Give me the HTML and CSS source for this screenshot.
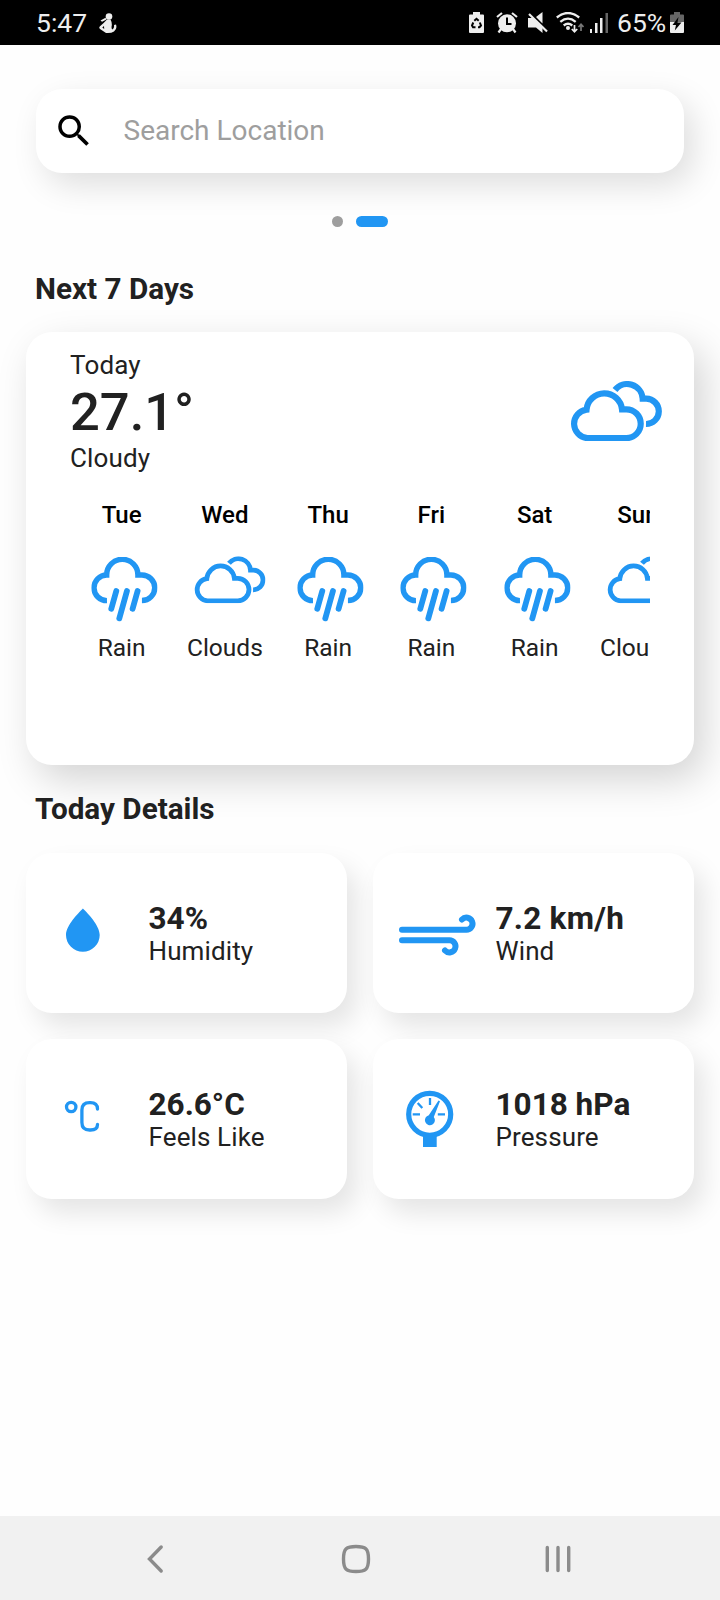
FILE: index.html
```html
<!DOCTYPE html>
<html lang="en">
<head>
<meta charset="utf-8">
<title>Weather</title>
<link rel="stylesheet" href="styles.css">
</head>
<body>
<svg class="defs" width="0" height="0">
  <symbol id="clouds" viewBox="93 182 276 181">
    <g fill="none" stroke="currentColor" stroke-width="18.500">
      <path d="M145 353.500H262A43 43 0 0 0 262 267H249A53.500 53.500 0 0 0 142.500 268A43 43 0 0 0 145 353.500Z"/>
      <path d="M228 209A46.500 46.500 0 0 1 311 235H322A38 38 0 0 1 321 311"/>
    </g>
  </symbol>
  <symbol id="rain" viewBox="93 230 199 194">
    <g fill="none" stroke="currentColor" stroke-width="16.500">
      <path d="M140 361A38.500 38.500 0 0 1 139 284A46.500 46.500 0 0 1 233 284H245A38.500 38.500 0 0 1 245 361"/>
      <path stroke-linecap="round" stroke-width="17.500" d="M168 332L153 385.500M200 332L177 414.500M232 332L217 385.500"/>
    </g>
  </symbol>
</svg>
<div class="screen">
  <header class="status">
    <span class="clock">5:47</span>
    <svg class="figure" width="18" height="21" viewBox="0 0 18 21" fill="#eee">
      <circle cx="10" cy="3.500" r="3.300"/>
      <path d="M1.500 7.500L6.500 4.800L7.500 6.500L3 8.800Z"/>
      <path fill-rule="evenodd" d="M8 6.500H11.500Q13.500 10 12.500 14Q12.500 16 13.500 16.500Q15.500 15.500 15 12L17 11.500Q18.500 16 15 18.500Q12 20.500 7 20Q4 18 1 16Q-.5 14.500 1 13.200Q4 11 8 6.500ZM5 13L3.300 14.500L5.200 16Z"/>
    </svg>
    <div class="indicators">
      <svg width="15" height="22" viewBox="0 0 15 22">
        <path fill="#eee" d="M4 0H11V2.500H14Q15 2.500 15 3.500V20Q15 21 14 21H1Q0 21 0 20V3.500Q0 2.500 1 2.500H4Z"/>
        <path fill="none" stroke="#000" stroke-width="2" d="M5.300 8.700L7.500 6.800L9.700 8.700M10.800 10.500L12 13.500L10.500 15.200H9M6.500 15.200H4L3 13.500L4.300 10.500"/>
      </svg>
      <svg class="alarm" width="22" height="22" viewBox="0 0 22 22">
        <circle cx="11" cy="11.300" r="9" fill="#eee"/>
        <path fill="none" stroke="#eee" stroke-width="2.200" d="M1 5L6 1M21 5L16 1M5 17L2.500 20.500M17 17L19.500 20.500"/>
        <path fill="none" stroke="#000" stroke-width="2" d="M11 5.500V12H15.500"/>
      </svg>
      <svg class="mute" width="20" height="22" viewBox="0 0 20 22">
        <path fill="#eee" d="M0 6H5L14.500 15V21L8 15.500H0ZM8 5L14.500 0V11.500Z"/>
        <path stroke="#eee" stroke-width="2.200" d="M1 2L19 19.500"/>
      </svg>
      <svg class="wifi" width="28" height="22" viewBox="0 0 28 22">
        <g fill="none" stroke="#eee" stroke-width="2.300">
          <path d="M.8 5.500Q12 -3.500 23.200 5.500M4.300 9.800Q12 3.500 19.700 9.800M7.700 13.500Q12 10 16.300 13.500"/>
          <path stroke-width="1.700" d="M18.500 13V19.500M15.800 17L18.500 19.800L21.200 17"/>
          <path stroke="#777" stroke-width="1.700" d="M25 19V12.500M22.500 15L25 12.300L27.500 15"/>
        </g>
        <circle cx="12" cy="16" r="2" fill="#eee"/>
      </svg>
      <svg class="signal" width="18" height="22" viewBox="0 0 18 22">
        <path fill="#eee" d="M0 17H2V21H0ZM5 11H7.500V21H5ZM10 6H12.500V21H10Z"/>
        <path fill="#666" d="M15.500 1H18V21H15.500Z"/>
      </svg>
      <span class="percent">65%</span>
      <svg class="battery" width="14" height="22" viewBox="0 0 14 22">
        <path fill="#666" d="M4 0H10V2.500H13Q14 2.500 14 3.500V10H0V3.500Q0 2.500 1 2.500H4Z"/>
        <path fill="#eee" d="M0 10H14V20Q14 21 13 21H1Q0 21 0 20Z"/>
        <path fill="#000" d="M8.500 5L2.500 13H6L4.800 18.500L11.500 10.500H7.500Z"/>
      </svg>
    </div>
  </header>

  <main class="content">
    <div class="search">
      <svg width="42" height="42" viewBox="0 0 24 24"><path d="M15.500 14h-.79l-.28-.27A6.471 6.471 0 0 0 16 9.500 6.500 6.500 0 1 0 9.500 16c1.610 0 3.090-.59 4.230-1.570l.27.28v.79l5 4.990L20.490 19l-4.990-5zm-6 0C7.010 14 5 11.990 5 9.500S7.010 5 9.500 5 14 7.010 14 9.500 11.990 14 9.500 14z"/></svg>
      <span class="placeholder">Search Location</span>
    </div>
    <div class="pager"><i class="dot"></i><i class="dot active"></i></div>
    <h2 class="heading">Next 7 Days</h2>
    <section class="forecast">
      <div class="now">
        <div>
          <div class="label">Today</div>
          <div class="temperature">27.1°</div>
          <div class="label condition">Cloudy</div>
        </div>
        <svg class="blue" width="92" height="60.300"><use href="#clouds"/></svg>
      </div>
      <div class="days">
        <div class="day"><b>Tue</b><svg class="blue icon"><use href="#rain" width="66.300" height="64.600" x="5.300" y="1"/></svg><span>Rain</span></div>
        <div class="day"><b>Wed</b><svg class="blue icon"><use href="#clouds" width="71.500" height="47" x="5" y="0.300"/></svg><span>Clouds</span></div>
        <div class="day"><b>Thu</b><svg class="blue icon"><use href="#rain" width="66.300" height="64.600" x="5.300" y="1"/></svg><span>Rain</span></div>
        <div class="day"><b>Fri</b><svg class="blue icon"><use href="#rain" width="66.300" height="64.600" x="5.300" y="1"/></svg><span>Rain</span></div>
        <div class="day"><b>Sat</b><svg class="blue icon"><use href="#rain" width="66.300" height="64.600" x="5.300" y="1"/></svg><span>Rain</span></div>
        <div class="day"><b>Sun</b><svg class="blue icon"><use href="#clouds" width="71.500" height="47" x="5" y="0.300"/></svg><span>Clouds</span></div>
      </div>
    </section>
    <h2 class="heading details-heading">Today Details</h2>
    <section class="details">
      <div class="tile">
        <svg class="blue" width="84" height="60" viewBox="0 0 84 60"><path fill="currentColor" d="M30.900 5.600C35.500 10 47.700 22.500 47.700 32A16.850 16.700 0 0 1 14 32C14 22.500 26.500 10 30.900 5.600Z"/></svg>
        <div class="reading"><div class="value">34%</div><div class="name">Humidity</div></div>
      </div>
      <div class="tile">
        <svg class="blue" width="84" height="60" viewBox="0 0 84 60"><path fill="none" stroke="currentColor" stroke-width="6" stroke-linecap="round" d="M3 26.800H67A6.100 6.100 0 1 0 63 16.500M3 37.200H50A6.100 6.100 0 1 1 46 47.500"/></svg>
        <div class="reading"><div class="value wide">7.2 km/h</div><div class="name">Wind</div></div>
      </div>
      <div class="tile">
        <svg class="blue" width="84" height="60" viewBox="0 0 84 60"><g fill="none" stroke="currentColor" stroke-width="3.300"><circle cx="19.200" cy="18" r="4.700"/><path stroke-linecap="round" d="M45.500 20Q45.500 13.700 38.500 13.700H37.500Q29.900 13.700 29.900 21V33.500Q29.900 41 37.500 41H38.500Q45.500 41 45.500 35.500"/></g></svg>
        <div class="reading"><div class="value">26.6°C</div><div class="name">Feels Like</div></div>
      </div>
      <div class="tile">
        <svg class="blue" width="84" height="60" viewBox="0 0 84 60"><g fill="none" stroke="currentColor"><circle cx="30.700" cy="25.300" r="21" stroke-width="5.200"/><path stroke-width="2.300" d="M13.700 25.400H21M38.800 25.400H46M31 9V16M18.700 14L23.300 19"/></g><path fill="currentColor" d="M39.500 11.500L41 12.200L34.800 28A5 5 0 1 1 29.800 26.300ZM24 46H37.700V58H24Z"/></svg>
        <div class="reading"><div class="value">1018 hPa</div><div class="name">Pressure</div></div>
      </div>
    </section>
  </main>

  <nav class="navbar">
    <svg width="18" height="30" viewBox="0 0 18 30"><path d="M15.200 3L3.500 15L15.200 27"/></svg>
    <svg class="home" width="32" height="32" viewBox="0 0 32 32"><path d="M16 3.500C25.500 3.500 28.500 5.500 28.500 16S25.500 28.500 16 28.500 3.500 26.500 3.500 16 6.500 3.500 16 3.500Z"/></svg>
    <svg width="26" height="30" viewBox="0 0 26 30"><path d="M2.300 3.500V26.500M13 3.500V26.500M23.700 3.500V26.500"/></svg>
  </nav>
</div>
</body>
</html>
```

FILE: styles.css
```css
* { box-sizing: border-box; }
body { margin: 0; font-family: Roboto, sans-serif; color: #212121; background: #fefefe; }
.defs { position: absolute; }
.screen { width: 720px; height: 1600px; display: flex; flex-direction: column; overflow: hidden; }
svg { display: block; flex: none; }
.blue { color: #2196f3; }

.status { height: 45px; flex: none; background: #000; color: #eee; display: flex; align-items: flex-start; padding: 12px 36px 0; font-size: 26.500px; }
.clock, .percent { line-height: 21px; }
.clock { width: 63px; }
.figure { margin-top: 1px; }
.indicators { margin-left: auto; display: flex; }
.alarm { margin-left: 12px; }
.mute { margin-left: 10px; }
.wifi { margin-left: 8px; }
.signal { margin-left: 6px; }
.percent { width: 53px; margin-left: 9px; white-space: nowrap; }

.content { flex: 1; padding: 44px 26px 0; }
.search { height: 84px; margin: 0 10px; padding-left: 17px; display: flex; align-items: center; gap: 28.500px; background: #fff; border-radius: 26px; box-shadow: 9px 12px 33px rgba(0, 0, 0, .13); }
.placeholder { font-size: 28px; line-height: 34px; color: #9e9e9e; }
.pager { display: flex; justify-content: center; gap: 13px; margin-top: 43px; }
.dot { width: 11px; height: 11px; border-radius: 6px; background: #9e9e9e; }
.dot.active { width: 32px; background: #2196f3; }
.heading { margin: 45px 9px 0; font-size: 29.700px; line-height: 34px; font-weight: 700; height: 34px; }

.forecast { height: 433px; margin-top: 26px; padding: 18px 44px 0; border-radius: 26px; background: #fff; box-shadow: 10px 15px 38px rgba(0, 0, 0, .17); }
.now { display: flex; justify-content: space-between; height: 132px; margin-right: -12px; }
.now > svg { margin-top: 31px; }
.label { font-size: 26px; line-height: 30px; letter-spacing: .15px; }
.temperature { font-size: 52.500px; line-height: 61px; padding-top: 2px; font-weight: 500; }
.days { display: flex; width: 580px; overflow: hidden; height: 200px; }
.day { flex: none; width: 103.250px; display: flex; flex-direction: column; align-items: center; font-size: 24.500px; line-height: 30px; padding: 18px 0 0; }
.day b { font-weight: 500; color: #000; font-size: 24px; }
.icon { width: 72px; height: 68px; margin: 26px 0 9px; overflow: visible; }

.details-heading { margin-top: 27px; }
.details { display: grid; grid-template-columns: 1fr 1fr; gap: 26px; margin-top: 27px; }
.tile { height: 160px; display: flex; align-items: center; gap: 12.500px; padding-left: 26px; border-radius: 26px; background: #fff; box-shadow: 10px 14px 26px rgba(0, 0, 0, .1); }
.reading { padding-top: 2px; }
.value { font-size: 31.500px; line-height: 34px; font-weight: 700; font-kerning: none; white-space: nowrap; }
.value.wide { letter-spacing: .25px; }
.name { font-size: 26px; line-height: 30px; letter-spacing: .12px; }

.navbar { height: 84px; flex: none; background: #f1f1f1; display: flex; justify-content: space-between; align-items: center; padding: 1px 149px 0 146px; }
.navbar path { fill: none; stroke: #8b8b8b; stroke-width: 3.400; stroke-linecap: round; }
.home { margin-left: 3.500px; }
```
